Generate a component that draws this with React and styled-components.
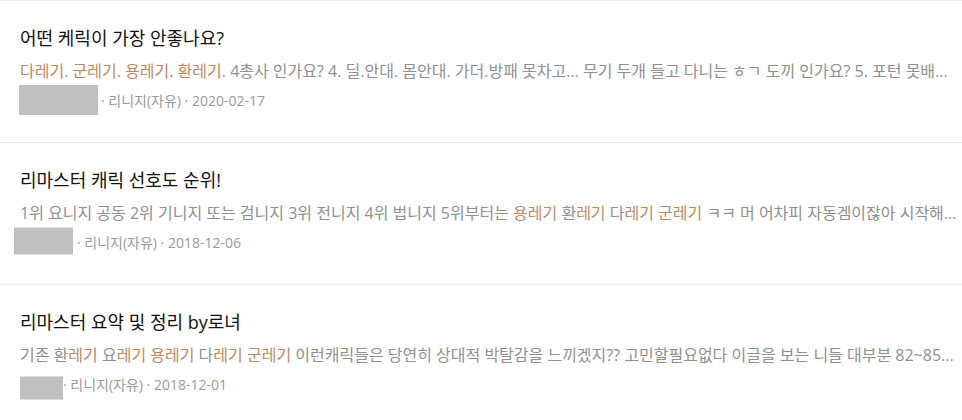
import React from "react";
import styled, { createGlobalStyle } from "styled-components";

const Global = createGlobalStyle`
  html, body { margin: 0; padding: 0; background: #fff; }
  body { font-family: "Open Sans", "Noto Sans CJK KR", sans-serif; }
`;

const List = styled.ul`
  list-style: none;
  margin: 0;
  padding: 0;
  width: 962px;
`;

const Item = styled.li`
  box-sizing: border-box;
  height: 142px;
  border-top: 1px solid #ebebeb;
  padding: 26px 0 0 20px;
  overflow: hidden;
`;

const Title = styled.a`
  display: block;
  font-size: 18px;
  line-height: 22px;
  color: #111;
  text-decoration: none;
  white-space: nowrap;
`;

const Snippet = styled.p`
  margin: 12px 0 0 0;
  font-size: 16px;
  line-height: 20px;
  color: #8f8f8f;
  white-space: nowrap;
`;

const Hl = styled.span`
  color: #c08760;
`;

const Meta = styled.div`
  margin-top: 4px;
  height: 30px;
  display: flex;
  align-items: center;
  font-size: 14px;
  color: #9a9a9a;
  white-space: nowrap;
`;

const Redact = styled.span`
  flex: none;
  width: ${(p) => p.$w}px;
  height: ${(p) => p.$h}px;
  margin-left: ${(p) => p.$ml}px;
  margin-right: ${(p) => p.$mr}px;
  transform: translateY(${(p) => p.$dy}px);
  background: #c0c0c0;
`;

const render = (parts) =>
  parts.map((p, i) => (typeof p === "string" ? p : <Hl key={i}>{p.h}</Hl>));

const items = [
  {
    title: "어떤 케릭이 가장 안좋나요?",
    snippet: [
      { h: "다레기" }, ". ", { h: "군레기" }, ". ", { h: "용레기" }, ". ", { h: "환레기" },
      ". 4총사 인가요? 4. 딜.안대. 몸안대. 가더.방패 못차고... 무기 두개 들고 다니는 ㅎㄱ 도끼 인가요? 5. 포턴 못배...",
    ],
    box: { w: 79, h: 30, ml: -1, mr: 3, dy: 0 },
    date: "2020-02-17",
  },
  {
    title: "리마스터 캐릭 선호도 순위!",
    snippet: [
      "1위 요니지 공동 2위 기니지 또는 검니지 3위 전니지 4위 법니지 5위부터는 ",
      { h: "용레기" }, " 환", { h: "레기" }, " 다", { h: "레기" }, " ", { h: "군레기" },
      " ㅋㅋ 머 어차피 자동겜이잖아 시작해...",
    ],
    box: { w: 59, h: 27, ml: -6, mr: 4, dy: -1.5 },
    date: "2018-12-06",
  },
  {
    title: "리마스터 요약 및 정리 by로녀",
    snippet: [
      "기존 환", { h: "레기" }, " 요", { h: "레기" }, " ", { h: "용레기" }, " 다", { h: "레기" }, " ", { h: "군레기" },
      " 이런캐릭들은 당연히 상대적 박탈감을 느끼겠지?? 고민할필요없다 이글을 보는 니들 대부분 82~85...",
    ],
    box: { w: 43, h: 23, ml: 0, mr: 0, dy: 3.5 },
    date: "2018-12-01",
  },
];

export default function App() {
  return (
    <>
      <Global />
      <List>
        {items.map((it, i) => (
          <Item key={i}>
            <Title href="#">{it.title}</Title>
            <Snippet>{render(it.snippet)}</Snippet>
            <Meta>
              <Redact $w={it.box.w} $h={it.box.h} $ml={it.box.ml} $mr={it.box.mr} $dy={it.box.dy} />
              {"· 리니지(자유) · " + it.date}
            </Meta>
          </Item>
        ))}
      </List>
    </>
  );
}
